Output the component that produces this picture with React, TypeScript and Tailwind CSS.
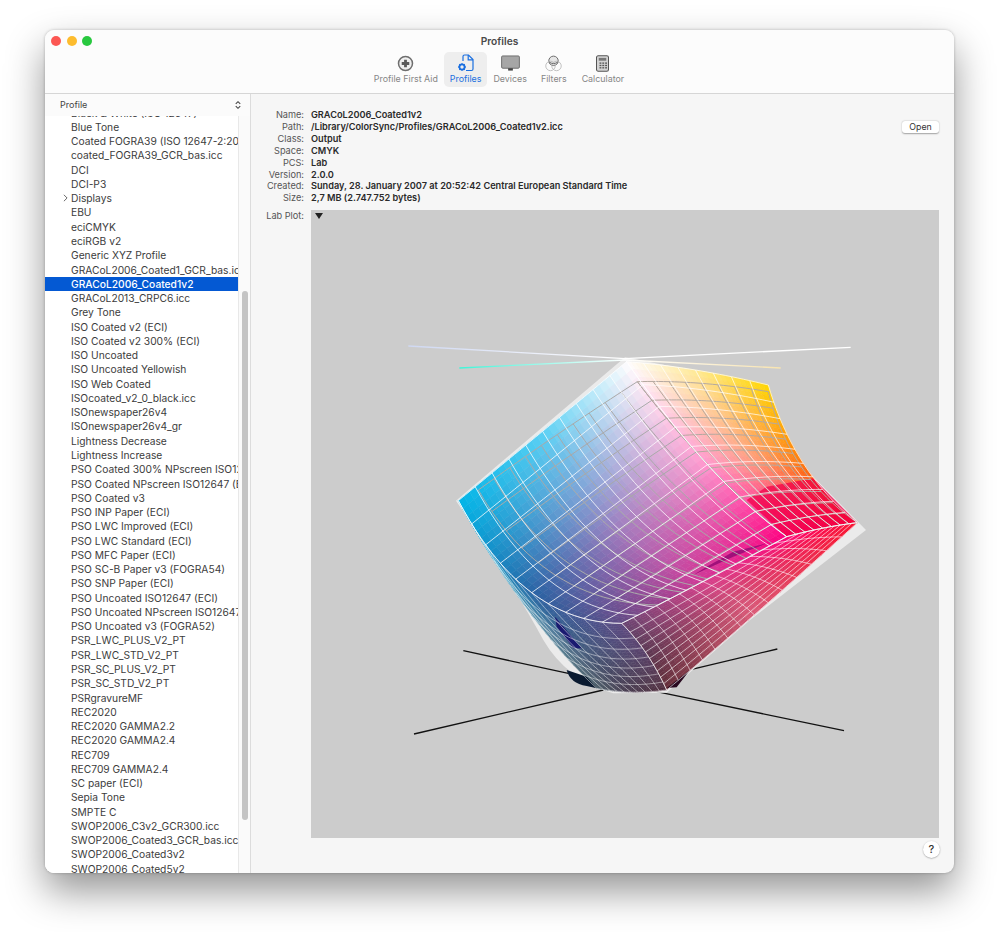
import * as React from 'react';

type P = [number, number];
type C = [number, number, number];

const profiles = [
    'Black & White (ISO 12647)', 'Blue Tone', 'Coated FOGRA39 (ISO 12647-2:2004)', 'coated_FOGRA39_GCR_bas.icc', 'DCI', 'DCI-P3', 'Displays', 'EBU', 'eciCMYK', 'eciRGB v2',
    'Generic XYZ Profile', 'GRACoL2006_Coated1_GCR_bas.icc', 'GRACoL2006_Coated1v2', 'GRACoL2013_CRPC6.icc', 'Grey Tone', 'ISO Coated v2 (ECI)',
    'ISO Coated v2 300% (ECI)', 'ISO Uncoated', 'ISO Uncoated Yellowish', 'ISO Web Coated', 'ISOcoated_v2_0_black.icc', 'ISOnewspaper26v4',
    'ISOnewspaper26v4_gr', 'Lightness Decrease', 'Lightness Increase', 'PSO Coated 300% NPscreen ISO12647 (ECI)', 'PSO Coated NPscreen ISO12647 (ECI)',
    'PSO Coated v3', 'PSO INP Paper (ECI)', 'PSO LWC Improved (ECI)', 'PSO LWC Standard (ECI)', 'PSO MFC Paper (ECI)', 'PSO SC-B Paper v3 (FOGRA54)',
    'PSO SNP Paper (ECI)', 'PSO Uncoated ISO12647 (ECI)', 'PSO Uncoated NPscreen ISO12647 (ECI)', 'PSO Uncoated v3 (FOGRA52)', 'PSR_LWC_PLUS_V2_PT',
    'PSR_LWC_STD_V2_PT', 'PSR_SC_PLUS_V2_PT', 'PSR_SC_STD_V2_PT', 'PSRgravureMF', 'REC2020', 'REC2020 GAMMA2.2', 'REC2020 GAMMA2.4', 'REC709',
    'REC709 GAMMA2.4', 'SC paper (ECI)', 'Sepia Tone', 'SMPTE C', 'SWOP2006_C3v2_GCR300.icc', 'SWOP2006_Coated3_GCR_bas.icc', 'SWOP2006_Coated3v2', 'SWOP2006_Coated5v2',
];

const details = [
    ['Name:', 'GRACoL2006_Coated1v2'],
    ['Path:', '/Library/ColorSync/Profiles/GRACoL2006_Coated1v2.icc'],
    ['Class:', 'Output'],
    ['Space:', 'CMYK'],
    ['PCS:', 'Lab'],
    ['Version:', '2.0.0'],
    ['Created:', 'Sunday, 28. January 2007 at 20:52:42 Central European Standard Time'],
    ['Size:', '2,7 MB (2.747.752 bytes)'],
];

const bez = (a: P, c: P, b: P, u: number): P => {
    const v = 1 - u;
    return [v * v * a[0] + 2 * v * u * c[0] + u * u * b[0], v * v * a[1] + 2 * v * u * c[1] + u * u * b[1]];
};

// cS0: p00-p01, cS1: p10-p11, cT0: p00-p10, cT1: p01-p11
interface Face {
    p00: P; p10: P; p01: P; p11: P;
    cT0: P; cT1: P; cS0: P; cS1: P;
    colors?: C[][];
    warpS?: (s: number) => number;
    warpT?: (t: number) => number;
    ls: number; lt: number;
}

// coons patch over four curved edges
const point = (f: Face, s: number, t: number): P => {
    const top = bez(f.p00, f.cS0, f.p01, t);
    const bot = bez(f.p10, f.cS1, f.p11, t);
    const lef = bez(f.p00, f.cT0, f.p10, s);
    const rig = bez(f.p01, f.cT1, f.p11, s);
    const out: P = [0, 0];
    for (let i = 0; i < 2; i++) {
        out[i] =
            (1 - s) * top[i] + s * bot[i] + (1 - t) * lef[i] + t * rig[i] -
            ((1 - s) * (1 - t) * f.p00[i] + (1 - s) * t * f.p01[i] + s * (1 - t) * f.p10[i] + s * t * f.p11[i]);
    }
    return out;
};

const mix = (a: C, b: C, u: number): C => [a[0] + (b[0] - a[0]) * u, a[1] + (b[1] - a[1]) * u, a[2] + (b[2] - a[2]) * u];

const colorAt = (m: C[][], s: number, t: number) => {
    const i = Math.min(1, Math.floor(s * 2));
    const j = Math.min(1, Math.floor(t * 2));
    const u = s * 2 - i;
    const v = t * 2 - j;
    const c = mix(mix(m[i][j], m[i][j + 1], v), mix(m[i + 1][j], m[i + 1][j + 1], v), u);
    return `rgb(${Math.round(c[0])},${Math.round(c[1])},${Math.round(c[2])})`;
};

const sameT: P = [925, 450];
const leftEdge: P = [370, 880];
const midEdge: P = [905, 760];

const faceA: Face = {
    p00: [680, 95], p10: [175, 512], p01: [1160, 620], p11: [665, 880],
    cT0: [428, 304], cT1: midEdge, cS0: sameT, cS1: leftEdge,
    ls: 10, lt: 10,
    colors: [
        [[255, 255, 255], [255, 150, 205], [255, 0, 128]],
        [[90, 210, 245], [160, 125, 190], [210, 55, 150]],
        [[0, 182, 232], [40, 100, 165], [95, 75, 130]],
    ],
};

const faceB: Face = {
    p00: [680, 95], p10: [1160, 620], p01: [1105, 165], p11: [1372, 578],
    cT0: sameT, cT1: [1182, 429], cS0: [880, 110], cS1: [1270, 590],
    ls: 10, lt: 8,
    colors: [
        [[255, 255, 255], [255, 235, 150], [255, 215, 0]],
        [[255, 150, 205], [255, 155, 125], [255, 120, 10]],
        [[255, 0, 128], [255, 0, 80], [255, 0, 10]],
    ],
};

const faceC: Face = {
    p00: [1160, 620], p10: [665, 880], p01: [1372, 578], p11: [800, 1080],
    cT0: midEdge, cT1: [1040, 880], cS0: [1270, 590], cS1: [745, 960],
    ls: 14, lt: 10,
    warpT: (t) => Math.pow(t, 0.8),
    colors: [
        [[255, 0, 128], [255, 0, 70], [250, 10, 40]],
        [[215, 60, 140], [208, 72, 118], [218, 90, 118]],
        [[105, 70, 115], [92, 55, 82], [100, 45, 55]],
    ],
};

const faceD: Face = {
    p00: [175, 512], p10: [590, 1075], p01: [665, 880], p11: [800, 1080],
    cT0: [380, 880], cT1: [745, 960], cS0: leftEdge, cS1: [690, 1095],
    ls: 7, lt: 10,
    warpS: (s) => Math.pow(s, 0.7),
    colors: [
        [[0, 175, 225], [40, 100, 165], [95, 75, 130]],
        [[100, 160, 185], [65, 90, 125], [90, 65, 105]],
        [[70, 90, 100], [70, 55, 75], [85, 50, 65]],
    ],
};

const grayA: Face = {
    ...faceA,
    p00: [712, 155], p10: [235, 480], p11: [775, 825],
    cT0: [470, 310], cT1: [950, 730], cS0: [930, 440], cS1: [430, 820],
};

const grayB: Face = {
    ...faceB,
    p00: [712, 155], cT0: [930, 440], cS0: [900, 150], p01: [1105, 185], cT1: [1170, 440],
};

const SUB = 30;

const cells = (f: Face) => {
    const out: { d: string; c: string }[] = [];
    for (let i = 0; i < SUB; i++) {
        for (let j = 0; j < SUB; j++) {
            const s0 = i / SUB, s1 = (i + 1) / SUB, t0 = j / SUB, t1 = (j + 1) / SUB;
            const q = [point(f, s0, t0), point(f, s1, t0), point(f, s1, t1), point(f, s0, t1)];
            out.push({
                d: 'M' + q.map((p) => `${p[0].toFixed(1)},${p[1].toFixed(1)}`).join('L') + 'Z',
                c: colorAt(f.colors as C[][], (s0 + s1) / 2, (t0 + t1) / 2),
            });
        }
    }
    return out;
};

const lines = (f: Face) => {
    const out: string[] = [];
    const ws = f.warpS || ((x: number) => x);
    const wt = f.warpT || ((x: number) => x);
    for (let i = 0; i <= f.ls; i++) {
        const pts: string[] = [];
        for (let k = 0; k <= 24; k++) {
            const p = point(f, ws(i / f.ls), k / 24);
            pts.push(`${p[0].toFixed(1)},${p[1].toFixed(1)}`);
        }
        out.push('M' + pts.join('L'));
    }
    for (let j = 0; j <= f.lt; j++) {
        const pts: string[] = [];
        for (let k = 0; k <= 24; k++) {
            const p = point(f, k / 24, wt(j / f.lt));
            pts.push(`${p[0].toFixed(1)},${p[1].toFixed(1)}`);
        }
        out.push('M' + pts.join('L'));
    }
    return out.join('');
};

function LabPlot() {
    const fill = [faceD, faceC, faceA, faceB].flatMap(cells);
    return (
        // the viewBox is in 3x units, so strokes are three times their page width
        <svg viewBox="-267 -360 1884 1884" className="block w-full h-full">
            <defs>
                <linearGradient id="axisA" x1="178" y1="0" x2="675" y2="0" gradientUnits="userSpaceOnUse">
                    <stop offset="0" stopColor="#3ff5d8" />
                    <stop offset="1" stopColor="#ffffff" />
                </linearGradient>
                <linearGradient id="axisB" x1="675" y1="0" x2="1142" y2="0" gradientUnits="userSpaceOnUse">
                    <stop offset="0" stopColor="#ffffff" />
                    <stop offset="1" stopColor="#f8e4b0" />
                </linearGradient>
                <linearGradient id="axisC" x1="25" y1="0" x2="675" y2="0" gradientUnits="userSpaceOnUse">
                    <stop offset="0" stopColor="#cfd8f2" />
                    <stop offset="1" stopColor="#ffffff" />
                </linearGradient>
            </defs>
            <path d="M190,962L505,1030M1132,957L875,1018M42,1212L610,1080M1332,1202L770,1085" stroke="#111" strokeWidth="4" fill="none" />
            <path
                d="M168,512L675,82L1105,165Q1150,350 1240,440L1398,600L1050,870L800,1088L640,1090Q500,1050 430,930Q350,780 168,512Z"
                fill="#ebebeb"
            />
            {fill.map((c, i) => (
                <path key={i} d={c.d} fill={c.c} stroke={c.c} strokeWidth="1.5" />
            ))}
            <path d="M1040,510L1100,470L1240,445L1372,578L1160,620Z" fill="#f00048" opacity="0.75" />
            <path d="M880,735L1000,680L1100,640L1000,665L920,710Z" fill="#a0107a" />
            <path d="M465,860L545,955L520,955L470,890Z" fill="#1a1a70" />
            <path d="M500,1020Q510,1060 560,1068L590,1075L560,1040Z" fill="#0a1a30" />
            <path d="M720,1080L830,1072L870,1020L800,1075Z" fill="#2a0a20" />
            <path d={lines(grayA)} stroke="#a9a9a9" strokeWidth="3" fill="none" />
            <path d={lines(grayB)} stroke="#b5a9a0" strokeWidth="3" fill="none" />
            <path d={lines(faceD)} stroke="#ffffff" strokeOpacity="0.55" strokeWidth="2.5" fill="none" />
            <path d={lines(faceC)} stroke="#ffffff" strokeOpacity="0.6" strokeWidth="3" fill="none" />
            <path d={lines(faceA)} stroke="#ffffff" strokeOpacity="0.75" strokeWidth="3" fill="none" />
            <path d={lines(faceB)} stroke="#ffffff" strokeOpacity="0.7" strokeWidth="3" fill="none" />
            <path d="M25,48L675,86" stroke="url(#axisC)" strokeWidth="4" fill="none" />
            <path d="M675,86L1352,52" stroke="#ffffff" strokeWidth="4" fill="none" />
            <path d="M178,114L675,90" stroke="url(#axisA)" strokeWidth="4" fill="none" />
            <path d="M675,90L1142,114" stroke="url(#axisB)" strokeWidth="4" fill="none" />
        </svg>
    );
}

function FirstAidIcon() {
    return (
        <svg viewBox="0 0 18 18" className="w-[17px] h-[17px]">
            <circle cx="9" cy="9" r="7.4" fill="#f0f0f0" stroke="#6e6e6e" strokeWidth="1.6" />
            <path d="M9 5v8M5 9h8" stroke="#5c5c5c" strokeWidth="3" />
        </svg>
    );
}

function ProfilesIcon() {
    return (
        <svg viewBox="0 0 18 18" className="w-[18px] h-[18px]" fill="none" stroke="#1a6fe0">
            <path d="M6 7V2.5Q6 1 7.5 1H11.5L16 5.5V15Q16 16.5 14.5 16.5H9" strokeWidth="1.2" />
            <path d="M11.2 1V5.8H16" strokeWidth="1.2" />
            <circle cx="5" cy="13" r="2.6" strokeWidth="1.8" />
            <path d="M5 9.2v1.2M5 15.6v1.2M1.2 13h1.2M7.6 13h1.2M2.3 10.3l.9.9M6.8 14.8l.9.9M2.3 15.7l.9-.9M6.8 11.2l.9-.9" strokeWidth="1.3" />
        </svg>
    );
}

function DevicesIcon() {
    return (
        <svg viewBox="0 0 20 18" className="w-[19px] h-[17px]">
            <rect x="0.6" y="1" width="18.8" height="13" rx="1.2" fill="#a6a6a6" stroke="#6a6a6a" strokeWidth="1" />
            <rect x="7.5" y="14" width="5" height="2.5" fill="#444" />
        </svg>
    );
}

function FiltersIcon() {
    return (
        <svg viewBox="0 0 18 18" className="w-[17px] h-[17px]" fill="none">
            <circle cx="9" cy="6.2" r="5" fill="#e6e6e6" stroke="#666" strokeWidth="1" />
            <circle cx="5.8" cy="11.6" r="5" stroke="#bdbdbd" strokeWidth="1" />
            <circle cx="12.2" cy="11.6" r="5" stroke="#bdbdbd" strokeWidth="1" />
            <path d="M4.4 7.4Q9 10.8 13.6 7.4" stroke="#666" strokeWidth="1" />
        </svg>
    );
}

function CalculatorIcon() {
    const keys = [8.5, 11, 13.5].flatMap((y) => [5, 8, 11].map((x) => [x, y]));
    return (
        <svg viewBox="0 0 16 18" className="w-[15px] h-[17px]">
            <rect x="1.6" y="0.8" width="12.8" height="16.4" rx="1.8" fill="#d4d4d4" stroke="#555" strokeWidth="1.1" />
            <rect x="4" y="3" width="8" height="3" fill="#777" />
            {keys.map(([x, y]) => (
                <rect key={`${x}-${y}`} x={x - 0.2} y={y - 0.6} width="2" height="1.4" fill="#555" />
            ))}
        </svg>
    );
}

function ToolItem({ label, active, className, children }: { label: string; active?: boolean; className?: string; children: React.ReactNode }) {
    return (
        <div className={`flex flex-col items-center h-[35px] px-[6px] rounded-[5px] ${active ? 'bg-[#eeeeee] text-[#1a6fe0]' : 'text-[#868686]'} ${className || ''}`}>
            <div className="flex items-center justify-center h-[22px]">{children}</div>
            <span className="text-[8.9px] leading-[10px] whitespace-nowrap">{label}</span>
        </div>
    );
}

export default function App() {
    return (
        <div className="min-h-[932px] bg-white pt-[30px] pl-[45px] font-['Inter','Liberation_Sans',sans-serif]">
            <div className="flex flex-col w-[909px] h-[843px] overflow-hidden rounded-[9px] bg-[#f6f6f6] shadow-[0_18px_38px_rgba(0,0,0,0.42),0_0_3px_rgba(0,0,0,0.25)]">
                <header className="h-[64px] shrink-0 bg-[#fcfcfc] border-b border-[#d6d6d6]">
                    <div className="grid grid-cols-[1fr_auto_1fr] items-center h-[22px]">
                        <div className="flex items-center gap-[5.5px] pl-[6px]">
                            <span className="w-[10px] h-[10px] rounded-full bg-[#fc5753]" />
                            <span className="w-[10px] h-[10px] rounded-full bg-[#fdbc2e]" />
                            <span className="w-[10px] h-[10px] rounded-full bg-[#28c83f]" />
                        </div>
                        <div className="pt-[1px] text-[10.2px] font-semibold text-[#4a4a4a]">Profiles</div>
                    </div>
                    <nav className="flex justify-center h-[35px] pr-[1px]">
                        <ToolItem label="Profile First Aid"><FirstAidIcon /></ToolItem>
                        <ToolItem label="Profiles" active><ProfilesIcon /></ToolItem>
                        <ToolItem label="Devices" className="mr-[2px]"><DevicesIcon /></ToolItem>
                        <ToolItem label="Filters" className="mr-[3px]"><FiltersIcon /></ToolItem>
                        <ToolItem label="Calculator"><CalculatorIcon /></ToolItem>
                    </nav>
                </header>
                <div className="flex flex-1 min-h-0">
                    <aside className="flex flex-col w-[206px] shrink-0 border-r border-[#dcdcdc] bg-[#fbfbfb]">
                        <div className="flex items-center justify-between h-[22px] shrink-0 pl-[15px] pr-[9px] text-[9px] text-[#444]">
                            <span>Profile</span>
                            <svg viewBox="0 0 8 12" className="w-[6px] h-[10px]" fill="none" stroke="#444" strokeWidth="1.4">
                                <path d="M1 4.5L4 1.5L7 4.5M1 7.5L4 10.5L7 7.5" />
                            </svg>
                        </div>
                        <div className="flex flex-1 min-h-0">
                            <div className="w-[193px] overflow-hidden bg-white">
                                <ul className="-mt-[10.4px]">
                                    {profiles.map((name) => {
                                        const selected = name === 'GRACoL2006_Coated1v2';
                                        return (
                                            <li
                                                key={name}
                                                className={`relative h-[14.27px] leading-[14.27px] pl-[26px] text-[10.25px] whitespace-nowrap overflow-hidden ${selected ? 'bg-[#0459d3] text-white font-medium' : 'text-[#3c3c3c]'}`}
                                            >
                                                {name === 'Displays' && (
                                                    <svg viewBox="0 0 6 10" className="absolute left-[18px] top-[3px] w-[5px] h-[8px]" fill="none" stroke="#555" strokeWidth="1.1">
                                                        <path d="M1 1l4 4l-4 4" />
                                                    </svg>
                                                )}
                                                {name}
                                            </li>
                                        );
                                    })}
                                </ul>
                            </div>
                            <div className="flex-1 border-l border-[#e8e8e8] bg-[#fafafa] px-[2.5px] pt-[175px] pb-[53px]">
                                <div className="h-full rounded-full bg-[#c4c4c4]" />
                            </div>
                        </div>
                    </aside>
                    <main className="flex flex-col flex-1 min-w-0 pt-[15px] pr-[15px]">
                        {details.map(([label, value]) => (
                            <div key={label} className="flex items-center h-[11.9px] text-[9.18px]">
                                <span className="w-[53px] text-right text-[#555]">{label}</span>
                                <span className="ml-[7px] font-semibold text-[#2a2a2a] whitespace-nowrap">{value}</span>
                                {label === 'Path:' && (
                                    <button className="ml-auto flex items-center justify-center w-[37px] h-[12px] rounded-[3px] bg-white text-[8.8px] text-[#333] shadow-[0_0.5px_1.5px_rgba(0,0,0,0.35)]">
                                        Open
                                    </button>
                                )}
                            </div>
                        ))}
                        <div className="flex mt-[6px]">
                            <span className="w-[53px] text-right text-[9.18px] leading-[11px] text-[#555]">Lab Plot:</span>
                            <div className="relative ml-[7px] w-[628px] h-[628px] bg-[#cccccc]">
                                <LabPlot />
                                <span className="absolute left-[4px] top-[3px] w-0 h-0 border-x-[4px] border-x-transparent border-t-[6px] border-t-[#222]" />
                            </div>
                        </div>
                        <div className="flex justify-end mt-[3px] -mr-[1px]">
                            <button className="flex items-center justify-center w-[17px] h-[17px] rounded-full bg-white text-[11px] font-medium text-[#333] shadow-[0_0.5px_1.5px_rgba(0,0,0,0.4)]">
                                ?
                            </button>
                        </div>
                    </main>
                </div>
            </div>
        </div>
    );
}
